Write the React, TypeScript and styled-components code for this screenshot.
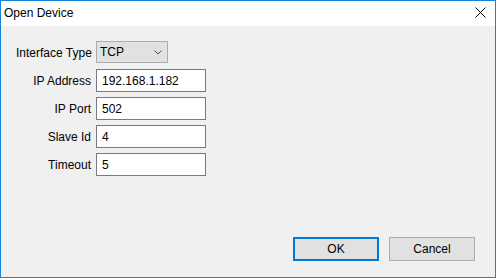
import React from "react";
import styled, { createGlobalStyle } from "styled-components";

const GlobalStyle = createGlobalStyle`
  html, body {
    margin: 0;
    padding: 0;
    background: #ffffff;
  }
  * {
    box-sizing: border-box;
  }
`;

const fields = [
  { label: "IP Address", value: "192.168.1.182" },
  { label: "IP Port", value: "502" },
  { label: "Slave Id", value: "4" },
  { label: "Timeout", value: "5" },
];

export default function App() {
  return (
    <>
      <GlobalStyle />
      <Window>
        <TitleBar>
          <Title>Open Device</Title>
          <CloseButton aria-label="Close">
            <svg width="11" height="11" viewBox="0 0 11 11">
              <path d="M0.5 0.5 L10.5 10.5 M10.5 0.5 L0.5 10.5" stroke="#000" strokeWidth="1" />
            </svg>
          </CloseButton>
        </TitleBar>
        <Body>
          <Form>
            <Label>Interface Type</Label>
            <Combo>
              <span>TCP</span>
              <svg width="8" height="5" viewBox="0 0 8 5">
                <path d="M0.5 0.5 L4 4 L7.5 0.5" stroke="#505050" fill="none" strokeWidth="1" />
              </svg>
            </Combo>
            {fields.map((f) => (
              <React.Fragment key={f.label}>
                <Label>{f.label}</Label>
                <Input defaultValue={f.value} />
              </React.Fragment>
            ))}
          </Form>
          <Actions>
            <Button $primary>OK</Button>
            <Button>Cancel</Button>
          </Actions>
        </Body>
      </Window>
    </>
  );
}

const Window = styled.div`
  width: 496px;
  height: 278px;
  display: flex;
  flex-direction: column;
  border: 1px solid #1883d7;
  font-family: "Segoe UI", "Liberation Sans", Arial, sans-serif;
  font-size: 12px;
  color: #000;
`;

const TitleBar = styled.div`
  height: 25px;
  display: flex;
  align-items: center;
  justify-content: space-between;
  background: #ffffff;
  padding-left: 3px;
`;

const Title = styled.div`
  font-size: 12px;
  margin-top: -1px;
`;

const CloseButton = styled.div`
  width: 11px;
  height: 11px;
  display: flex;
  margin: -2px 9px 0 0;
`;

const Body = styled.div`
  flex: 1;
  display: flex;
  flex-direction: column;
  justify-content: space-between;
  background: #f0f0f0;
  padding: 15px 20px 16px 15px;
`;

const Form = styled.div`
  display: grid;
  grid-template-columns: 75px 110px;
  grid-auto-rows: 23px;
  column-gap: 5px;
  row-gap: 5px;
  align-items: center;
`;

const Label = styled.div`
  text-align: right;
  white-space: nowrap;
`;

const Combo = styled.div`
  width: 72px;
  height: 22px;
  display: flex;
  align-items: center;
  justify-content: space-between;
  padding: 0 5px 0 3px;
  background: #e1e1e1;
  border: 1px solid #adadad;
  align-self: start;
`;

const Input = styled.input`
  width: 110px;
  height: 23px;
  border: 1px solid #7a7a7a;
  background: #fff;
  padding: 0 5px;
  font: inherit;
  color: #000;
  outline: none;
`;

const Actions = styled.div`
  display: flex;
  justify-content: flex-end;
  gap: 10px;
`;

const Button = styled.button<{ $primary?: boolean }>`
  width: 86px;
  height: 24px;
  background: #e1e1e1;
  border: ${(p) => (p.$primary ? "2px solid #0078d7" : "1px solid #adadad")};
  font: inherit;
  color: #000;
  padding: 0;
`;
